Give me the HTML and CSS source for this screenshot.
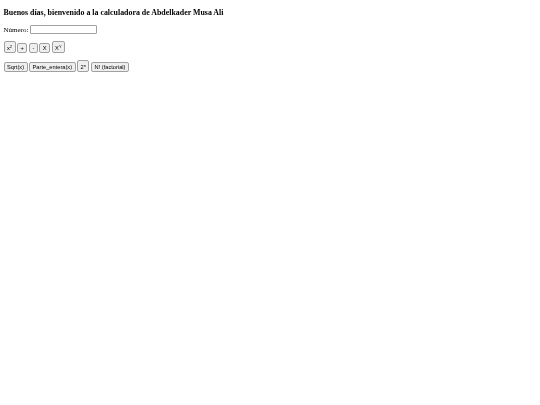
FILE: index.html
```html
<!DOCTYPE html>
<html lang="es">
<head>
    <meta charset="UTF-8">
    <title>Calculadora</title>
    <link rel="stylesheet" href="styles.css">
</head>
<body>
    <h1 class="title">Buenos días, bienvenido a la calculadora de Abdelkader Musa Ali</h1>

    <div class="row-number">
        <label for="numero">Número:</label>
        <input type="text" id="numero" class="number-input">
    </div>

    <div class="buttons">
        <button class="btn btn-pow">x<sup>2</sup></button>
        <button class="btn">+</button>
        <button class="btn">-</button>
        <button class="btn">X</button>
        <button class="btn btn-pow">X<sup>Y</sup></button>
    </div>

    <div class="buttons">
        <button class="btn">Sqrt(x)</button>
        <button class="btn">Parte_entera(x)</button>
        <button class="btn btn-pow">2<sup>n</sup></button>
        <button class="btn">N! (factorial)</button>
    </div>
</body>
</html>
```

FILE: styles.css
```css
html {
    background: #fff;
}

body {
    margin: 0;
    padding: 8px 3.5px;
    font-family: "Liberation Serif", serif;
    font-size: 7px;
    color: #000;
    filter: blur(0.25px);
}

.title {
    margin: 0 0 7px;
    font-size: 7.9px;
    line-height: 10px;
    font-weight: bold;
}

.row-number {
    display: flex;
    align-items: center;
    gap: 1.5px;
    margin-bottom: 7px;
}

.number-input {
    width: 65px;
    height: 7px;
    padding: 0;
    border: 1px solid #a0a0a0;
    border-radius: 1px;
    background: #fff;
}

.buttons {
    display: flex;
    align-items: flex-end;
    gap: 1.5px;
    margin-bottom: 7px;
}

.btn {
    padding: 1px 2.5px;
    font-family: "Liberation Sans", sans-serif;
    font-size: 5.7px;
    line-height: 6px;
    color: #000;
    background: #efefef;
    border: 1px solid #a0a0a0;
    border-radius: 2px;
}

.btn-pow {
    padding-top: 2px;
}

.btn sup {
    font-size: 4px;
    line-height: 6px;
    vertical-align: 2px;
}
```
